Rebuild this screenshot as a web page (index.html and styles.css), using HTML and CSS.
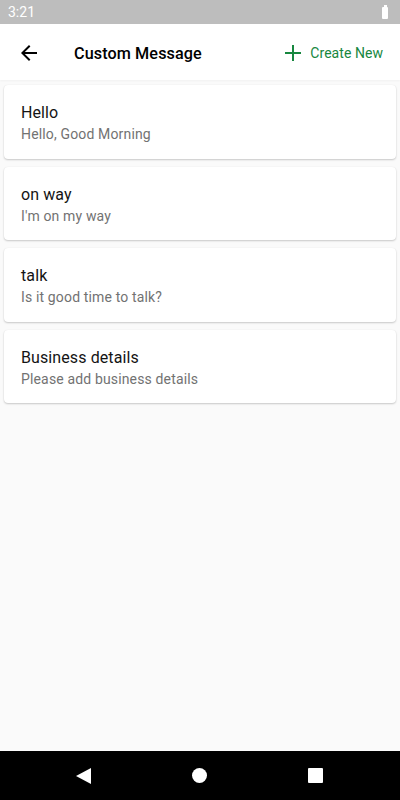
FILE: index.html
```html
<!DOCTYPE html>
<html>
<head>
<meta charset="utf-8">
<link rel="stylesheet" href="styles.css">
</head>
<body>
<div class="screen">
  <div class="status">
    <span class="time">3:21</span>
    <span class="battery"></span>
  </div>
  <div class="appbar">
    <svg class="back" width="24" height="24" viewBox="0 0 24 24"><path d="M20 11H7.83l5.59-5.59L12 4l-8 8 8 8 1.41-1.41L7.83 13H20v-2z" fill="#000"/></svg>
    <div class="title">Custom Message</div>
    <div class="create">
      <svg width="16" height="16" viewBox="0 0 16 16"><path d="M8 0v16M0 8h16" stroke="#17873f" stroke-width="2"/></svg>
      <span>Create New</span>
    </div>
  </div>
  <div class="list">
    <div class="card"><div class="ct">Hello</div><div class="cs">Hello, Good Morning</div></div>
    <div class="card"><div class="ct">on way</div><div class="cs">I'm on my way</div></div>
    <div class="card"><div class="ct">talk</div><div class="cs">Is it good time to talk?</div></div>
    <div class="card"><div class="ct">Business details</div><div class="cs">Please add business details</div></div>
  </div>
  <div class="nav">
    <span class="nback"></span>
    <span class="nhome"></span>
    <span class="nrecent"></span>
  </div>
</div>
</body>
</html>
```
FILE: styles.css
```css
* { box-sizing: border-box; }
html, body { margin: 0; padding: 0; }
body { font-family: Roboto, "Noto Sans", sans-serif; background: #fafafa; }
.screen { width: 400px; height: 800px; display: flex; flex-direction: column; background: #fafafa; }
.status { height: 24px; background: #bdbdbd; display: flex; align-items: center; justify-content: space-between; padding: 0 12px 0 8px; }
.time { color: #fff; font-size: 14px; line-height: 24px; }
.battery { position: relative; width: 6px; height: 12px; background: #fff; border-radius: 1px; margin-top: 2px; }
.battery::before { content: ""; position: absolute; left: 1.5px; top: -2px; width: 3px; height: 2px; background: #fff; }
.appbar { height: 56px; background: #fff; display: flex; align-items: center; padding: 2px 17px 0 17px; box-shadow: 0 1px 2px rgba(0,0,0,0.04); }
.back { display: block; margin-right: 33px; }
.title { font-size: 16.2px; font-weight: 500; color: #000; flex: 1; letter-spacing: 0.1px; }
.create { display: flex; align-items: center; color: #17873f; font-size: 14px; letter-spacing: 0.05px; }
.create svg { margin-right: 9px; }
.list { flex: 1; padding: 5px 4px 0; display: flex; flex-direction: column; gap: 8px; }
.card { background: #fff; border-radius: 4px; padding: 17px 17px 14.5px; box-shadow: 0 1px 2px rgba(0,0,0,0.2), 0 0 1px rgba(0,0,0,0.08); }
.ct { font-size: 16px; line-height: 22px; color: #141414; letter-spacing: 0.1px; }
.cs { font-size: 14px; line-height: 20px; color: #727272; letter-spacing: 0.15px; }
.nav { height: 49px; background: #000; display: flex; align-items: center; justify-content: space-between; padding: 0 77px 0 76px; }
.nback { width: 0; height: 0; border-top: 8px solid transparent; border-bottom: 8px solid transparent; border-right: 15px solid #fff; }
.nhome { width: 15px; height: 15px; border-radius: 50%; background: #fff; }
.nrecent { width: 15px; height: 15px; background: #fff; border-radius: 1px; }
```
